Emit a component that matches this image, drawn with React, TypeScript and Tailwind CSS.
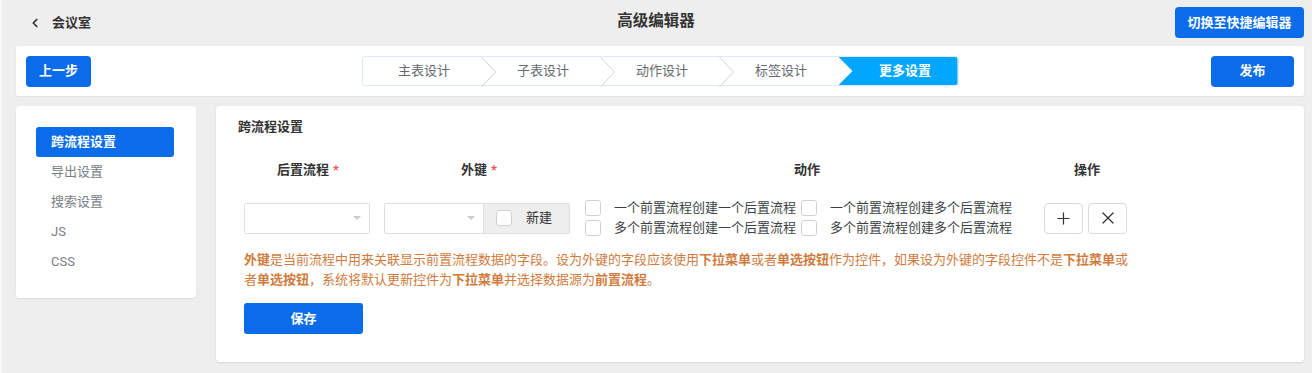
import { ChevronLeft, Plus, X } from "lucide-react";

const steps = ["主表设计", "子表设计", "动作设计", "标签设计", "更多设置"];
const menu = ["跨流程设置", "导出设置", "搜索设置", "JS", "CSS"];

function Chevron() {
    return (
        <svg className="absolute -right-[15px] top-0 z-10" width="16" height="30" viewBox="0 0 16 30">
            <path d="M0.5 0 L14.5 15 L0.5 30" fill="none" stroke="#cfd3da" strokeWidth="1" />
        </svg>
    );
}

function Caret() {
    return <span className="h-0 w-0 border-x-[4px] border-t-[4px] border-x-transparent border-t-[#c8cbd1]" />;
}

function Box() {
    return <span className="block h-4 w-4 shrink-0 rounded-[3px] border-[1.5px] border-[#cfd1d5] bg-white" />;
}

function Check({ label }: { label: string }) {
    return (
        <div className="flex h-5 items-center">
            <Box />
            <span className="ml-[13px] text-[13px] leading-5 text-[#3c3f45]">{label}</span>
        </div>
    );
}

export default function App() {
    return (
        <div
            className="min-h-[373px] w-full bg-[#eeeeee] pb-[11px] shadow-[inset_2px_0_0_#f7f7f7]"
            style={{ fontFamily: "Roboto, 'Noto Sans CJK SC', sans-serif" }}
        >
            {/* header */}
            <div className="flex h-[46px] items-center pl-[28px] pr-[8px]">
                <div className="flex flex-1 items-center">
                    <ChevronLeft size={14} strokeWidth={3} className="text-[#333]" />
                    <span className="ml-[10px] text-[13px] font-bold text-[#333]">会议室</span>
                </div>
                <div className="-mt-[2px] mr-[20px] text-[15.5px] font-bold text-[#333]">高级编辑器</div>
                <div className="flex flex-1 justify-end">
                    <button className="-mt-[1px] h-[31px] w-[129px] rounded-[4px] bg-[#0a6ce9] text-[13px] font-bold text-white">切换至快捷编辑器</button>
                </div>
            </div>

            {/* toolbar */}
            <div className="ml-[16px] flex h-[50px] w-[1288px] items-center justify-between rounded-[2px] bg-white px-[10px] shadow-[0_1px_2px_rgba(0,0,0,0.06)]">
                <button className="h-[31px] w-[65px] rounded-[4px] bg-[#0a6ce9] text-[13px] font-bold text-white">上一步</button>
                <div className="ml-[18px] flex h-[30px] rounded-[3px] border border-[#dfe9f5]">
                    {steps.map((s, i) => {
                        const active = i === steps.length - 1;
                        if (active) {
                            return (
                                <div
                                    key={s}
                                    className="flex h-full w-[119px] items-center justify-center rounded-r-[3px] bg-[#00a6ff] pl-[14px] text-[13px] font-bold text-white [clip-path:polygon(0_0,100%_0,100%_100%,0_100%,14px_50%)]"
                                >
                                    {s}
                                </div>
                            );
                        }
                        return (
                            <div key={s} className="relative flex h-full w-[119px] items-center justify-center pl-[4px] text-[13px] text-[#666a70]">
                                {s}
                                {i < steps.length - 2 && <Chevron />}
                            </div>
                        );
                    })}
                </div>
                <button className="h-[31px] w-[83px] rounded-[4px] bg-[#0a6ce9] text-[13px] font-bold text-white">发布</button>
            </div>

            {/* body */}
            <div className="ml-[16px] mt-[10px] flex items-start">
                <div className="w-[180px] rounded-[4px] bg-white py-[21px] pl-[20px] pr-[22px] shadow-[0_1px_2px_rgba(0,0,0,0.08)]">
                    {menu.map((m, i) => (
                        <div
                            key={m}
                            className={
                                i === 0
                                    ? "flex h-[30px] items-center rounded-[3px] bg-[#0a6ce9] pl-[15px] text-[13px] font-bold text-white"
                                    : "flex h-[30px] items-center pl-[15px] text-[13px] text-[#7a7e85]"
                            }
                        >
                            {m}
                        </div>
                    ))}
                </div>

                <div className="ml-[20px] w-[1088px] rounded-[4px] bg-white pb-[28px] pl-[20px] pt-[11px] shadow-[0_1px_2px_rgba(0,0,0,0.1)]">
                    <div className="pl-[2px] text-[13px] font-bold leading-5 text-[#333]">跨流程设置</div>

                    <div className="mt-[13px] flex h-[40px] items-center text-[13px] font-bold text-[#333]">
                        <div className="w-[144px] text-center">
                            后置流程<span className="ml-[4px] text-[#f0504f]">*</span>
                        </div>
                        <div className="w-[198px] text-center">
                            外键<span className="ml-[4px] text-[#f0504f]">*</span>
                        </div>
                        <div className="w-[458px] text-center">动作</div>
                        <div className="w-[102px] text-center">操作</div>
                    </div>

                    <div className="mt-[8px] flex h-[40px] items-center">
                        <div className="w-[144px] pl-[8px]">
                            <div className="flex h-[31px] w-[126px] items-center justify-end rounded-[2px] border border-[#dcdfe4] pr-[8px]">
                                <Caret />
                            </div>
                        </div>
                        <div className="w-[198px] pl-[4px]">
                            <div className="flex h-[31px] w-[186px]">
                                <div className="flex w-[100px] items-center justify-end rounded-l-[2px] border border-[#dcdfe4] pr-[8px]">
                                    <Caret />
                                </div>
                                <div className="flex w-[86px] items-center rounded-r-[2px] border border-l-0 border-[#dcdfe4] bg-[#eeeeee] pl-[12px] text-[13px] text-[#333]">
                                    <Box />
                                    <span className="ml-[14px]">新建</span>
                                </div>
                            </div>
                        </div>
                        <div className="flex w-[458px] pl-[7px]">
                            <div className="w-[216px]">
                                <Check label="一个前置流程创建一个后置流程" />
                                <Check label="多个前置流程创建一个后置流程" />
                            </div>
                            <div>
                                <Check label="一个前置流程创建多个后置流程" />
                                <Check label="多个前置流程创建多个后置流程" />
                            </div>
                        </div>
                        <div className="flex w-[102px] gap-[5px] pl-[8px]">
                            <button className="flex h-[31px] w-[39px] items-center justify-center rounded-[4px] border border-[#d6dae1] bg-white text-[#333]">
                                <Plus size={19} strokeWidth={1.5} />
                            </button>
                            <button className="flex h-[31px] w-[39px] items-center justify-center rounded-[4px] border border-[#d6dae1] bg-white text-[#333]">
                                <X size={20} strokeWidth={1.5} />
                            </button>
                        </div>
                    </div>

                    <p className="ml-[8px] mt-[12px] w-[895px] text-[13px] leading-5 text-[#d07b3d]">
                        <b>外键</b>是当前流程中用来关联显示前置流程数据的字段。设为外键的字段应该使用<b>下拉菜单</b>或者<b>单选按钮</b>作为控件，如果设为外键的字段控件不是<b>下拉菜单</b>或者<b>单选按钮</b>，系统将默认更新控件为<b>下拉菜单</b>并选择数据源为<b>前置流程</b>。
                    </p>

                    <button className="ml-[8px] mt-[13px] h-[31px] w-[119px] rounded-[3px] bg-[#0a6ce9] text-[13px] font-bold text-white">保存</button>
                </div>
            </div>
        </div>
    );
}
